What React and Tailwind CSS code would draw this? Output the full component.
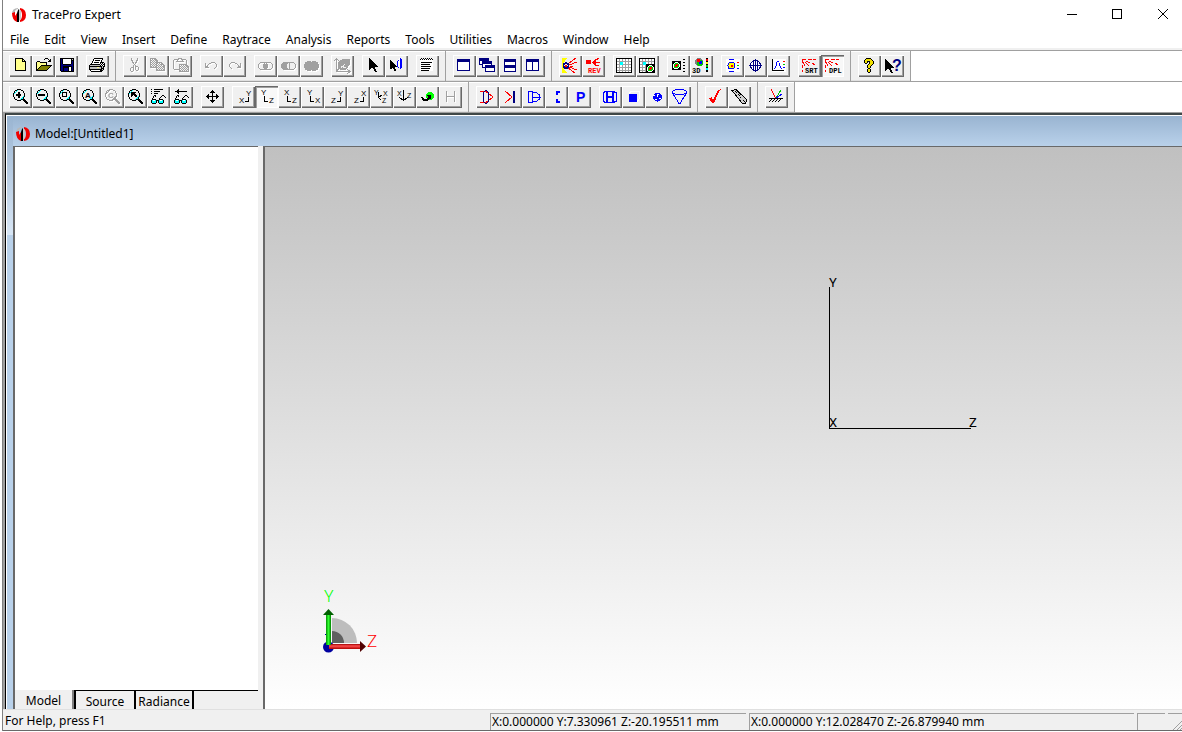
import React from "react";

const COLORS = {
  K: "#000000",
  W: "#ffffff",
  Y: "#ffff8c",
  O: "#808000",
  N: "#000080",
  S: "#c0c0c0",
  G: "#a0a0a0",
  C: "#00ffff",
  R: "#ff0000",
  L: "#00d000",
  D: "#f0e000",
};

// One character per pixel, "." is transparent
function Pixels({ x, y, rows }) {
  return (
    <g>
      {rows.map((row, j) =>
        row.split("").map((c, i) =>
          c === "." ? null : (
            <rect key={`${i}-${j}`} x={x + i} y={y + j} width="1" height="1" fill={COLORS[c]} />
          )
        )
      )}
    </g>
  );
}

function Letter({ x, y, size = 8, fill = "#000", bold, mono, children }) {
  return (
    <text
      x={x}
      y={y}
      fontSize={size}
      fill={fill}
      stroke="none"
      fontWeight={bold ? 700 : 400}
      fontFamily={mono ? '"Liberation Mono", monospace' : '"Liberation Sans", Arial, sans-serif'}
    >
      {children}
    </text>
  );
}

const NEW = [
  "KKKKKKKK...",
  "KYYYYYYKK..",
  "KYYYYYYKYK.",
  "KYYYYYYKKKK",
  "KYYYYYYYYYK",
  "KYYYYYYYYYK",
  "KYYYYYYYYYK",
  "KYYYYYYYYYK",
  "KYYYYYYYYYK",
  "KYYYYYYYYYK",
  "KYYYYYYYYYK",
  "KYYYYYYYYYK",
  "KKKKKKKKKKK",
];

const OPEN = [
  ".........KKK....",
  "........K...K.K.",
  ".............KK.",
  ".KKK........KKK.",
  "KYYYKKKKKKK.....",
  "KYYYYYYYYYK.....",
  "KYYYYYYYYYK.....",
  "KYYYYKKKKKKKKKKK",
  "KYYYKOOOOOOOOOK.",
  "KYYKOOOOOOOOOK..",
  "KYKOOOOOOOOOK...",
  "KKOOOOOOOOOK....",
  "KKKKKKKKKKK.....",
];

const SAVE = [
  "KKKKKKKKKKKKKK",
  "KNKWWWWWWWWKSK",
  "KNKWWWWWWWWKKK",
  "KNKWWWWWWWWKNK",
  "KNKWWWWWWWWKNK",
  "KNKWWWWWWWWKNK",
  "KNNKKKKKKKKNNK",
  "KNNNNNNNNNNNNK",
  "KNNKKKKKKKKKNK",
  "KNNKKKKKKWWKNK",
  "KNNKNNNNKWWKNK",
  "KNNKNNNNKWWKNK",
  "KNNKNNNNKWWKNK",
  ".KKKKKKKKKKKKK",
];

const PRINT = [
  ".....KKKKKKKKK..",
  "....KWWWWWWWWK..",
  "....KWKKKKKWK...",
  "...KWWWWWWWWK...",
  "...KWKKKKKWKKKK.",
  "..KWWWWWWWWK.KWK",
  ".KKKKKKKKKK.K.KK",
  "KSSSSSSSSSSK.KWK",
  "KKKKKKKKKKKKKSKK",
  "KSSSSSSSYYSSKSK.",
  "KSSSSSSSSSSSKKK.",
  "KKKKKKKKKKKKKSK.",
  ".KWWWWWWWWWKKK..",
  "..KKKKKKKKKKK...",
];

const CUT = [
  ".G.....G.",
  ".G.....G.",
  ".GG...GG.",
  "..G...G..",
  "..GG.GG..",
  "...G.G...",
  "....G....",
  "...G.G...",
  "...G.GGG.",
  ".GGG.G..G",
  "G..G.G..G",
  "G..G.G..G",
  "G..G..GG.",
  ".GG......",
];

const COPY = [
  "GGGGGG..........",
  "G.G.GGG.........",
  "GG.G.GGG........",
  "G.G.G.GG........",
  "GG.G.GGGGGGG....",
  "G.G.G.GG.G.GG...",
  "GG.G.GG.G.GGGG..",
  "G.G.G.GG.G.G.GG.",
  "GG.G.GG.G.G.GGG.",
  "GGGGGGGG.G.G.GG.",
  "......G.G.G.G.G.",
  "......GG.G.G.GG.",
  "......GGGGGGGGG.",
];

const PASTE = [
  ".....GGGG.......",
  ".GGGGG..GGGGG...",
  "G...G....G...G..",
  "G..GGGGGGGG..G..",
  "G............G..",
  "G............G..",
  "G.....GGGGGGGG..",
  "G.....G.G.G.GGG.",
  "G.....GG.G.G.GGG",
  "G.....G.G.G.G.GG",
  "G.....GG.G.G.G.G",
  ".GGGGGG.G.G.G.GG",
  "......GG.G.G.G.G",
  "......GGGGGGGGGG",
];

const UNDO = [
  "......GGGG...",
  "G...GG....G..",
  "G..G.......G.",
  "G.G........G.",
  "GGG........G.",
  "GGGG......G..",
  ".........G...",
];

const MOVE = [
  "......K......",
  ".....KKK.....",
  "....KKKKK....",
  "......K......",
  "..K...K...K..",
  ".KK...K...KK.",
  "KKKKKKKKKKKKK",
  ".KK...K...KK.",
  "..K...K...K..",
  "......K......",
  "....KKKKK....",
  ".....KKK.....",
  "......K......",
];

const LENS = [
  "....KKKK........",
  "..KKC...KK......",
  ".K.C......K.....",
  ".KC.......K.....",
  "KC.........K....",
  "K..........K....",
  "K..........K....",
  "K.........CK....",
  ".K.......CK.....",
  ".K......CCK.....",
  "..KK...CKKKK....",
  "....KKKK..KKK...",
  "...........KKK..",
  "............KKK.",
  ".............KK.",
];

const LENS_OFF = LENS.map((r) => r.replace(/[KC]/g, "G"));

const GLASSES = [
  "...KK......KK...",
  "..K.K.....K..K..",
  "..K......K....K.",
  ".K......K.......",
  ".KKKK...KKKK....",
  "KCWWCKKKCWWCK...",
  "KCCCCK.KCCCCK...",
  "KCCCCK.KCCCCK...",
  ".KKKK...KKKK....",
];

const SPOT = [
  "KKKKKKKKK",
  "KKKWWWKKK",
  "KKWLLLWKK",
  "KWLLRRLWK",
  "KWLRRRLWK",
  "KWLRRLLWK",
  "KWLLLLWKK",
  "KKWWWWKKK",
  "KKKKKKKKK",
];

const LIST = [
  ".K.K.K.K.K.K.",
  "KWKWKWKWKWKWK",
  "WWWWWWWWWWWWW",
  "WWWWWWWWWWWWW",
  "WKKKKKKKKKKKW",
  "WWWWWWWWWWWWW",
  "WKKKKKKKKKWWW",
  "WWWWWWWWWWWWW",
  "WKKKKKKKKKKWW",
  "WWWWWWWWWWWWW",
  "WKKKKKKKKKWWW",
  "WWWWWWWWWWWWW",
  "WKKKKKKKKWWWW",
];

const QUESTION = [
  "...KKKKK...",
  "..KDDDDDK..",
  ".KDDDDDDDK.",
  ".KDDKKKDDDK",
  ".KDDK.KDDDK",
  "..KK..KDDDK",
  ".....KDDDK.",
  "....KDDDK..",
  "....KDDK...",
  "....KDDK...",
  ".....KK....",
  "....KDDK...",
  "....KDDK...",
  "....KDDK...",
  ".....KK....",
];

function Cursor({ x, y, s = 1 }) {
  return (
    <path
      transform={`translate(${x} ${y}) scale(${s})`}
      d="M0 0L9 9H5.5L8 14H6L3.5 9.5L0 12Z"
      fill="#000"
    />
  );
}

function Axis({ top, side, flip }) {
  return flip ? (
    <>
      <Letter x={14} y={10}>{top}</Letter>
      <Letter x={7} y={17}>{side}</Letter>
      <path d="M16.5 11V15.5H13" stroke="#000" fill="none" />
    </>
  ) : (
    <>
      <Letter x={6} y={9}>{top}</Letter>
      <Letter x={14} y={17}>{side}</Letter>
      <path d="M9.5 10V15.5H13" stroke="#000" fill="none" />
    </>
  );
}

function Grid() {
  return (
    <>
      <rect x="3.5" y="3.5" width="15" height="14" fill="#fff" stroke="#000" />
      <path
        d="M6.5 4V17M9.5 4V17M12.5 4V17M15.5 4V17M4 6.5H18M4 9.5H18M4 12.5H18M4 15.5H18"
        stroke="#a0a0a0"
      />
      <rect x="7" y="7" width="3" height="3" fill="#0ff" />
    </>
  );
}

function Rays() {
  return (
    <path
      d="M4 4.5H8M10 4.5H14M15 4.5H18M8 6L12 8M14 8L17 10M7 7L11 11M5 7L7 11M4.5 4V8M4.5 10V13M4.5 15V17"
      stroke="#f00"
      fill="none"
    />
  );
}

function Frame({ x, y, w, h }) {
  return (
    <>
      <rect x={x + 0.5} y={y + 0.5} width={w - 1} height={h - 1} fill="#fff" stroke="#000080" />
      <rect x={x} y={y} width={w} height="3" fill="#000080" />
    </>
  );
}

// Drawn on the 23x22 button grid
const ICONS = {
  New: <Pixels x={6} y={3} rows={NEW} />,
  Open: <Pixels x={4} y={3} rows={OPEN} />,
  Save: <Pixels x={5} y={3} rows={SAVE} />,
  Print: <Pixels x={3} y={3} rows={PRINT} />,
  Cut: <Pixels x={7} y={3} rows={CUT} />,
  Copy: <Pixels x={4} y={3} rows={COPY} />,
  Paste: <Pixels x={4} y={3} rows={PASTE} />,
  Undo: <Pixels x={5} y={7} rows={UNDO} />,
  Redo: <Pixels x={5} y={7} rows={UNDO.map((r) => r.split("").reverse().join(""))} />,
  Intersect: (
    <g fill="none" stroke="#a0a0a0">
      <ellipse cx="9" cy="11" rx="5" ry="4" />
      <ellipse cx="14" cy="11" rx="5" ry="4" />
      <rect x="10.5" y="9" width="2" height="4" fill="#a0a0a0" />
    </g>
  ),
  Subtract: (
    <g fill="none" stroke="#a0a0a0">
      <ellipse cx="9" cy="11" rx="5" ry="4" fill="#a0a0a0" />
      <ellipse cx="14" cy="11" rx="5" ry="4" fill="#f0f0f0" />
      <path d="M12.5 8V14" />
    </g>
  ),
  Unite: (
    <g fill="#a0a0a0">
      <ellipse cx="9" cy="11" rx="5" ry="5" />
      <ellipse cx="14" cy="11" rx="5" ry="5" />
    </g>
  ),
  "Surface plot": (
    <g stroke="#a0a0a0" fill="none">
      <path d="M5.5 4V17M5 16.5H19M3 6L5.5 3.5L8 6M16 14L19 16.5L16 19M5 17L9 12" />
      <path d="M8 7L13 4H18V10L15 14H9L7 11Z" fill="#a0a0a0" />
      <path d="M10 11L15 13M10 13L14 9" stroke="#f0f0f0" />
    </g>
  ),
  Select: <Cursor x={7} y={3} />,
  "Select surface": (
    <>
      <Cursor x={5} y={5} s={0.8} />
      <path d="M13 4L14 3H16V14H15L13 11Z" fill="#fff" />
      <path d="M13.5 5Q10.5 9 13.5 13" stroke="#00f" fill="none" />
      <path d="M15 3H16Q19 9 16 14H15Z" fill="#00f" />
    </>
  ),
  Properties: <Pixels x={4} y={3} rows={LIST} />,
  "New window": <Frame x={4} y={4} w={13} h={12} />,
  Cascade: (
    <>
      <Frame x={3} y={3} w={10} h={7} />
      <Frame x={6} y={6} w={10} h={7} />
      <Frame x={9} y={10} w={10} h={7} />
    </>
  ),
  "Tile horizontally": (
    <>
      <Frame x={5} y={4} w={12} h={7} />
      <Frame x={5} y={10} w={12} h={7} />
    </>
  ),
  "Tile vertically": (
    <>
      <Frame x={4} y={4} w={7} h={12} />
      <Frame x={10} y={4} w={7} h={12} />
    </>
  ),
  "Trace rays": (
    <>
      <path d="M3 3H8L5 8V14L8 18H3Z" fill="#ff0" />
      <path d="M9 9L17 3M10 10L18 7M11 11.5H14M10 12L18 15M9 13L16 18" stroke="#f00" />
      <circle cx="7" cy="10.5" r="2.5" fill="#f0f0f0" stroke="#000080" strokeWidth="1.5" />
      <rect x="6" y="10" width="2" height="2" fill="#f00" />
    </>
  ),
  "Reverse trace": (
    <>
      <circle cx="6.5" cy="7" r="2.5" fill="#f00" />
      <path d="M10 7.5H18M11 7.5L13 5.5V9.5ZM14 5L17 3M14 10L17 11" stroke="#f00" fill="#f00" />
      <Letter x={6} y={18} size={7} fill="#f00" bold mono>REV</Letter>
    </>
  ),
  Irradiance: <Grid />,
  "Irradiance map": (
    <>
      <Grid />
      <Pixels x={10} y={9} rows={SPOT} />
    </>
  ),
  Candela: (
    <>
      <Pixels x={5} y={6} rows={SPOT} />
      <path d="M16 4.5H18M16 7.5H18M16 10.5H18M16 13.5H18M16 16.5H18" stroke="#000" />
    </>
  ),
  "3D irradiance": (
    <>
      <circle cx="9" cy="7" r="4" fill="#808080" />
      <circle cx="10" cy="8" r="3" fill="#00c800" />
      <rect x="9" y="6" width="3" height="3" fill="#00f" />
      <rect x="7" y="4" width="3" height="3" fill="#f00" />
      <Letter x={2} y={18} size={7} bold mono>3D</Letter>
      <rect x="16" y="3" width="2" height="14" fill="#000" />
      <rect x="16" y="4" width="2" height="2" fill="#f00" />
      <rect x="16" y="7" width="2" height="2" fill="#ff0" />
      <rect x="16" y="10" width="2" height="2" fill="#0c0" />
      <rect x="16" y="13" width="2" height="2" fill="#0ff" />
    </>
  ),
  "Polar candela": (
    <>
      <rect x="5" y="4" width="14" height="13" fill="#fff" />
      <ellipse cx="10.5" cy="10.5" rx="3.5" ry="3.5" fill="#ff0" stroke="#00f" />
      <rect x="10" y="10" width="2" height="2" fill="#f00" />
      <path d="M8 4.5H13M8 16.5H13" stroke="#00f" />
      <path d="M16 7.5H18" stroke="#f00" />
      <path d="M16 10.5H18" stroke="#0c0" />
      <path d="M16 13.5H18" stroke="#00f" />
    </>
  ),
  "Candela globe": (
    <g fill="none" stroke="#000080">
      <circle cx="11.5" cy="10.5" r="5" fill="#fff" />
      <ellipse cx="11.5" cy="10.5" rx="2.5" ry="5" />
      <path d="M5 10.5H18M11.5 4V17" />
    </g>
  ),
  "Candela plot": (
    <>
      <rect x="5" y="4" width="14" height="13" fill="#fff" />
      <path d="M5.5 4V15.5H17" stroke="#000" fill="none" />
      <path d="M7 14Q9 13 9.5 9Q11 3 12.5 9Q13 13 15 14" stroke="#00f" fill="none" />
      <path d="M16 6.5H18" stroke="#f00" />
      <path d="M16 9.5H18" stroke="#0c0" />
      <path d="M16 12.5H18" stroke="#00f" />
    </>
  ),
  "Sort rays": (
    <>
      <Rays />
      <Letter x={7} y={18} size={7} bold mono>SRT</Letter>
    </>
  ),
  "Display rays": (
    <>
      <Rays />
      <Letter x={8} y={18} size={7} bold mono>DPL</Letter>
    </>
  ),
  "Help topics": <Pixels x={5} y={3} rows={QUESTION} />,
  "Context help": (
    <>
      <Cursor x={4} y={4} />
      <Letter x={11} y={16} size={16} fill="#000080" bold>?</Letter>
    </>
  ),
  "Zoom in": (
    <>
      <Pixels x={4} y={3} rows={LENS} />
      <path d="M7 9H12M9.5 6V12" stroke="#000" strokeWidth="2" />
    </>
  ),
  "Zoom out": (
    <>
      <Pixels x={4} y={3} rows={LENS} />
      <path d="M6 9H13" stroke="#000" strokeWidth="2" />
    </>
  ),
  "Zoom window": (
    <>
      <Pixels x={4} y={3} rows={LENS} />
      <rect x="7.5" y="6.5" width="4" height="4" stroke="#000" fill="none" />
    </>
  ),
  "Zoom all": (
    <>
      <Pixels x={4} y={3} rows={LENS} />
      <Letter x={7} y={12} size={8} bold>A</Letter>
    </>
  ),
  "Zoom object": (
    <>
      <Pixels x={4} y={3} rows={LENS_OFF} />
      <Letter x={7} y={12} size={8} fill="#a0a0a0" bold>C</Letter>
    </>
  ),
  "Zoom previous": (
    <>
      <Pixels x={4} y={3} rows={LENS} />
      <path d="M7 6H12L10.5 7.5L13 10L12 12L9 9L7 11Z" fill="#000" />
    </>
  ),
  "View list": (
    <>
      <path d="M4 3.5H5M7 3.5H16M4 5.5H5M7 5.5H13M4 7.5H5M7 7.5H11" stroke="#000" />
      <Pixels x={4} y={9} rows={GLASSES} />
    </>
  ),
  "Previous view": (
    <>
      <path d="M5 5.5H17" stroke="#000" />
      <path d="M5 5.5L9 3V8Z" fill="#000" />
      <Pixels x={4} y={9} rows={GLASSES} />
    </>
  ),
  Pan: <Pixels x={5} y={4} rows={MOVE} />,
  "View XY": <Axis top="Y" side="X" flip />,
  "View YZ": <Axis top="Y" side="Z" />,
  "View XZ": <Axis top="X" side="Z" />,
  "View YX": <Axis top="Y" side="X" />,
  "View ZY": <Axis top="Y" side="Z" flip />,
  "View ZX": <Axis top="X" side="Z" flip />,
  Isometric: (
    <>
      <Letter x={4} y={9} size={7}>Y</Letter>
      <Letter x={13} y={10} size={7}>X</Letter>
      <Letter x={12} y={17} size={7}>Z</Letter>
      <path d="M8.5 6V11.5L12 9M8.5 11.5L11 14" stroke="#000" fill="none" />
    </>
  ),
  Trimetric: (
    <>
      <Letter x={4} y={10} size={7}>X</Letter>
      <Letter x={14} y={12} size={7}>Z</Letter>
      <path d="M10.5 4V15M6 11L10.5 14.5L15 11" stroke="#000" fill="none" />
    </>
  ),
  Rotate: (
    <>
      <circle cx="14" cy="10" r="4" fill="#0f0" />
      <path d="M6 11Q7 15 11 14L14 11" stroke="#000" strokeWidth="2" fill="none" />
      <path d="M10 9H15V13Z" fill="#000" />
    </>
  ),
  Home: <path d="M7.5 5V16M15.5 5V16M7 10.5H16" stroke="#a0a0a0" fill="none" />,
  Lens: (
    <g fill="none">
      <path d="M4 5.5H10L17 11L10 16.5H4" stroke="#f00" />
      <ellipse cx="10" cy="11" rx="3" ry="6.5" stroke="#000080" />
    </g>
  ),
  Mirror: (
    <>
      <path d="M6 5L13 11L6 17" stroke="#f00" fill="none" />
      <rect x="14" y="5" width="2" height="12" fill="#000080" />
    </>
  ),
  Reflector: (
    <g fill="none" stroke="#00f">
      <path d="M6.5 5V17M6 5.5H10.5V16.5H6M10 6.5H14L17.5 9V13L14 15.5H10M10 11H19" />
    </g>
  ),
  Aperture: <path d="M15 6H12V9M12 13V16H15" stroke="#00f" strokeWidth="2" fill="none" />,
  Primitive: <Letter x={8} y={16} size={14} fill="#00f" bold>P</Letter>,
  Tube: (
    <g fill="none" stroke="#00f" strokeWidth="1.5">
      <path d="M6 5.5H15L17.5 7V15L15 16.5H6L4.5 15V7Z" />
      <path d="M8 6V16M8 11H14M14 6V16" />
    </g>
  ),
  Block: (
    <>
      <path d="M7 8L9 5H17V13L15 16" stroke="#fff" fill="none" />
      <rect x="7" y="8" width="8" height="8" fill="#00f" />
    </>
  ),
  Sphere: (
    <>
      <circle cx="12.5" cy="11" r="4.5" fill="#00f" />
      <path d="M8 9.5H10M12 8.5H14M12.5 9V11M14 12.5H16M10 13.5H12" stroke="#fff" />
    </>
  ),
  Cone: (
    <g fill="none" stroke="#00f">
      <ellipse cx="11.5" cy="6" rx="7" ry="2.5" />
      <path d="M4.5 7L11 17.5H12L18.5 7" />
    </g>
  ),
  Apply: <path d="M4 12L7 11L8 14L13 4L16 3L14 6L9 17H7Z" fill="#f00" />,
  Texture: (
    <g fill="none" stroke="#000">
      <path d="M4 4.5L8 3.5L19 14L17 17.5L14 17Z" fill="#d0d0d0" />
      <path d="M7 5L17 16" strokeDasharray="1 1" />
    </g>
  ),
  Scatter: (
    <g fill="none">
      <path d="M6 3L10.5 12" stroke="#f00" />
      <path d="M11 12L16 4" stroke="#0c0" />
      <path d="M11 12L17 8" stroke="#00f" />
      <path d="M4 12.5H18M4 16L7 13M7 16L10 13M10 16L13 13M13 16L16 13" stroke="#000" />
    </g>
  ),
};

const DISABLED = ["Cut", "Copy", "Paste", "Undo", "Redo", "Intersect", "Subtract", "Unite", "Surface plot", "Zoom object", "Home"];
const PRESSED = ["Display rays", "View YZ"];

// bar -> band -> group -> button
const BARS = [
  [
    [["New", "Open", "Save"], ["Print"]],
    [["Cut", "Copy", "Paste"], ["Undo", "Redo"], ["Intersect", "Subtract", "Unite"], ["Surface plot"], ["Select", "Select surface"], ["Properties"]],
    [["New window", "Cascade", "Tile horizontally", "Tile vertically"]],
    [["Trace rays", "Reverse trace"], ["Irradiance", "Irradiance map"], ["Candela", "3D irradiance"], ["Polar candela", "Candela globe", "Candela plot"], ["Sort rays", "Display rays"]],
    [["Help topics", "Context help"]],
  ],
  [
    [
      ["Zoom in", "Zoom out", "Zoom window", "Zoom all", "Zoom object", "Zoom previous", "View list", "Previous view"],
      ["Pan"],
      ["View XY", "View YZ", "View XZ", "View YX", "View ZY", "View ZX", "Isometric", "Trimetric", "Rotate", "Home"],
    ],
    [["Lens", "Mirror", "Reflector", "Aperture", "Primitive"], ["Tube", "Block", "Sphere", "Cone"]],
    [["Apply", "Texture"]],
    [["Scatter"]],
  ],
];

const MENU = ["File", "Edit", "View", "Insert", "Define", "Raytrace", "Analysis", "Reports", "Tools", "Utilities", "Macros", "Window", "Help"];

function ToolButton({ name }) {
  const pressed = PRESSED.includes(name);
  const disabled = DISABLED.includes(name);
  return (
    <button
      type="button"
      aria-label={name}
      aria-pressed={pressed || undefined}
      disabled={disabled}
      className={
        pressed
          ? "h-[22px] w-[23px] bg-[#f8f8f8] shadow-[inset_1px_1px_#696969,inset_2px_2px_#a0a0a0,inset_-1px_-1px_#fff]"
          : "h-[22px] w-[23px] bg-[#f0f0f0] shadow-[inset_1px_1px_#fff,inset_-1px_-1px_#696969,inset_-2px_-2px_#a0a0a0]"
      }
    >
      <svg
        viewBox="0 0 23 22"
        shapeRendering="crispEdges"
        className={disabled ? "h-[22px] w-[23px] drop-shadow-[1px_1px_0_#fff]" : "h-[22px] w-[23px]"}
      >
        {ICONS[name]}
      </svg>
    </button>
  );
}

function Toolbar({ bands }) {
  return (
    <div role="toolbar" className="flex">
      {bands.map((groups, i) => (
        <div
          key={i}
          className={`flex h-[31px] items-center gap-2 border-t border-r border-[#a0a0a0] bg-[#f0f0f0] pr-[6px] shadow-[inset_0_1px_#fff,inset_0_-1px_#e0e0e0] ${
            i === 0 ? "pl-[6px]" : "pl-[7px]"
          }`}
        >
          {groups.map((names) => (
            <div key={names[0]} className="flex">
              {names.map((n) => (
                <ToolButton key={n} name={n} />
              ))}
            </div>
          ))}
        </div>
      ))}
      <div className="flex-1 border-t border-[#a0a0a0] first-of-type:border-0" />
    </div>
  );
}

function Logo() {
  return (
    <svg viewBox="0 0 16 16" className="h-4 w-4 shrink-0">
      <path d="M7 1Q1 1 1 7H4V4Q5 2 7 2Z" fill="#b8b8b8" />
      <path d="M1 6Q1 13 6 15V6L4 9V5Z" fill="#f00000" />
      <path d="M7 3L8 2V15H6V6Z" fill="#000" />
      <path d="M9 1Q15 2 15 8Q15 14 9 15V13Q11 12 11 8Q11 4 9 3Z" fill="#f00000" />
      <path d="M8 2V14L10 12V4Z" fill="#c8c8c8" />
    </svg>
  );
}

function WindowButtons() {
  return (
    <div className="flex gap-[30px] pr-[11px]">
      <button type="button" aria-label="Minimize" className="h-4 w-4">
        <svg viewBox="0 0 16 16" className="h-4 w-4" stroke="#000">
          <path d="M4 7.5H14" />
        </svg>
      </button>
      <button type="button" aria-label="Maximize" className="h-4 w-4">
        <svg viewBox="0 0 16 16" className="h-4 w-4" stroke="#000" fill="none">
          <rect x="3.5" y="2.5" width="9" height="9" />
        </svg>
      </button>
      <button type="button" aria-label="Close" className="h-4 w-4">
        <svg viewBox="0 0 16 16" className="h-4 w-4" stroke="#000">
          <path d="M3 2L13 12M13 2L3 12" />
        </svg>
      </button>
    </div>
  );
}

function Viewport() {
  return (
    <div className="relative flex-1 border-t border-l-2 border-[#696969] bg-linear-to-b from-[#c0c0c0] to-white">
      <svg
        className="absolute top-[126px] left-[560px] h-[165px] w-[160px]"
        viewBox="825 273 160 165"
        fontFamily="Roboto, sans-serif"
        fontSize="13"
      >
        <path d="M829.5 287V428.5H971" stroke="#000" fill="none" shapeRendering="crispEdges" />
        <text x="829" y="287">Y</text>
        <text x="829" y="427">X</text>
        <text x="969" y="427">Z</text>
      </svg>
      <svg
        className="absolute bottom-[49px] left-[50px] h-[80px] w-[80px]"
        viewBox="315 580 80 80"
        fontFamily="Roboto, sans-serif"
        fontWeight="300"
      >
        <defs>
          <linearGradient id="green">
            <stop offset="0" stopColor="#009000" />
            <stop offset="0.5" stopColor="#30ff30" />
            <stop offset="1" stopColor="#008000" />
          </linearGradient>
          <linearGradient id="red" x2="0" y2="1">
            <stop offset="0" stopColor="#a00000" />
            <stop offset="0.4" stopColor="#ff5050" />
            <stop offset="1" stopColor="#b00000" />
          </linearGradient>
        </defs>
        <path d="M332 643V618A25 25 0 0 1 357 643Z" fill="#bdbdbd" />
        <path d="M332 643V631A12 12 0 0 1 344 643Z" fill="#606060" />
        <path d="M325 634.5H328" stroke="#0000a0" />
        <circle cx="328.5" cy="647" r="5.5" fill="#0000a0" />
        <rect x="329" y="644" width="32" height="5" fill="url(#red)" />
        <path d="M360 641L366 646.5L360 652Z" fill="#500000" />
        <rect x="326" y="614" width="5" height="31" fill="url(#green)" />
        <path d="M328.5 609L334 615H323Z" fill="#006000" />
        <text x="324" y="602" fontSize="16" fill="#00ff00">Y</text>
        <text x="367" y="647" fontSize="17" fill="#ff0000">Z</text>
      </svg>
    </div>
  );
}

function Sidebar() {
  return (
    <aside className="flex w-[243px] flex-col border-t border-[#696969] bg-white">
      <div className="flex-1" />
      <div role="tablist" className="flex h-[19px] bg-[#f0f0f0] leading-[22px]">
        <button type="button" role="tab" aria-selected="true" className="w-[59px] border-r-2 border-[#808080]">
          Model
        </button>
        <button type="button" role="tab" aria-selected="false" className="w-[60px] border-t border-l-2 border-black">
          Source
        </button>
        <button type="button" role="tab" aria-selected="false" className="w-[60px] border-t border-r-2 border-l-2 border-black">
          Radiance
        </button>
        <div className="flex-1 border-t border-black" />
      </div>
    </aside>
  );
}

function StatusBar() {
  return (
    <footer className="flex h-[22px] items-stretch gap-[3px] border-t border-b border-t-[#e0e0e0] border-b-[#696969] bg-[#f0f0f0] pt-[3px] leading-4">
      <div className="flex-1 pl-[2px]">For Help, press F1</div>
      <div className="w-[256px] border-t border-l border-[#a0a0a0] pl-px">X:0.000000 Y:7.330961 Z:-20.195511 mm</div>
      <div className="w-[385px] border-t border-l border-[#a0a0a0] pl-px">X:0.000000 Y:12.028470 Z:-26.879940 mm</div>
      <div className="w-[28px] border-t border-l border-[#a0a0a0]" />
      <div className="flex w-[14px] items-end justify-end border-t border-[#a0a0a0]">
        <svg viewBox="0 0 10 10" className="h-[10px] w-[10px]" stroke="#a0a0a0">
          <path d="M1 10L10 1M5 10L10 5M8 10L10 8" />
        </svg>
      </div>
    </footer>
  );
}

export default function App() {
  return (
    <div className='flex min-h-screen flex-col bg-white pb-px pl-[2px] font-["Noto_Sans","Open_Sans",sans-serif] text-[12px] text-black'>
      <div className="flex flex-1 flex-col border-l border-[#808080]">
        <header className="flex h-[30px] items-center gap-[5px] pl-2">
          <Logo />
          <h1 className="flex-1">TracePro Expert</h1>
          <WindowButtons />
        </header>
        <nav className="flex h-5 items-center gap-px border-b-2 border-[#f0f0f0] pt-[2px]">
          {MENU.map((m) => (
            <button key={m} type="button" className="px-[7px]">
              {m}
            </button>
          ))}
        </nav>
        <div className="flex flex-col">
          {BARS.map((bands, i) => (
            <Toolbar key={i} bands={bands} />
          ))}
        </div>
        <main className="flex flex-1 flex-col border-t border-l-2 border-[#a0a0a0]">
          <section className="flex flex-1 flex-col border-t-2 border-l border-t-[#404848] border-l-black bg-[linear-gradient(#99b4d1,#d8e6f5_120px,#b9d1ea_120px)] pl-[7px] shadow-[inset_1px_1px_#fff]">
            <div className="mt-px flex h-[30px] items-center gap-1 bg-linear-to-b from-[#99b4d1] to-[#b9d1ea] pl-[2px] pt-[6px]">
              <Logo />
              <h2>Model:[Untitled1]</h2>
            </div>
            <div className="flex flex-1 border-l-2 border-[#696969]">
              <Sidebar />
              <div className="w-[5px] bg-[#f0f0f0]" />
              <Viewport />
            </div>
          </section>
        </main>
        <StatusBar />
      </div>
    </div>
  );
}
